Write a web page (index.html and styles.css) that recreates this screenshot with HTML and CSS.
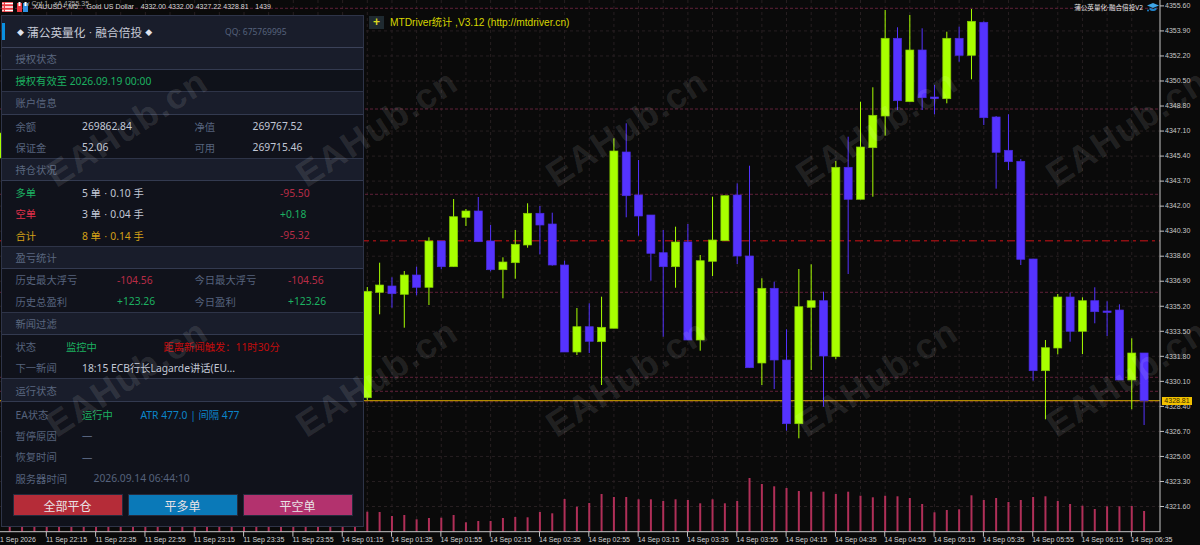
FILE: index.html
```html
<!DOCTYPE html>
<html lang="en">
<head>
    <meta charset="UTF-8">
    <title>XAUUSD+ M5</title>
    <link rel="stylesheet" href="styles.css">
</head>
<body>
<div class="terminal">
    <svg id="chart" class="chart" width="1200" height="545" viewBox="0 0 1200 545"></svg>

    <div class="topbar">
        <svg class="top-icon" width="11" height="10" viewBox="0 0 11 10">
            <rect width="11" height="10" fill="#e8373f"/>
            <path d="M3 1.5h8M3 5h8M3 8.5h8" stroke="#fff" stroke-width="1.3"/>
            <path d="M0 1.5h2M0 5h2M0 8.5h2" stroke="#ffd0d0" stroke-width="1.3"/>
        </svg>
        <svg class="top-icon" width="11" height="10" viewBox="0 0 11 10">
            <path d="M0 1h5v9H0z" fill="#e8373f"/>
            <path d="M6 1h5v9H6z" fill="#2f8fe0"/>
            <path d="M1.5 0h2v4h-2zM7.5 0h2v4h-2z" fill="#fff"/>
        </svg>
        <span class="symbol-info">XAUUSD+,M5:&nbsp;&nbsp; Gold US Dollar&nbsp;&nbsp; 4332.00 4332.00 4327.22 4328.81&nbsp;&nbsp; 1439</span>
        <span class="top-ghost">v Cnt 1 &nbsp; xA 4355.35</span>
        <span class="top-right">蒲公英量化·融合倍投V2</span>
        <svg class="cap-icon" width="12" height="10" viewBox="0 0 12 10">
            <path d="M0 3.5 6 1l6 2.5L6 6z" fill="#3ea6e8"/>
            <path d="M2.5 5.5v2.2C4 9.4 8 9.4 9.5 7.7V5.5L6 7z" fill="#1f7fc4"/>
            <circle cx="1" cy="8.5" r="1" fill="#1f7fc4"/>
        </svg>
    </div>

    <div class="indicator-tag">
        <span class="tag-plus">+</span>
        <span class="tag-name">MTDriver统计 ,V3.12 (http://mtdriver.cn)</span>
    </div>

    <div class="price-axis">
        <span>4355.60</span><span>4353.90</span><span>4352.20</span><span>4350.50</span><span>4348.80</span><span>4347.10</span><span>4345.40</span>
        <span>4343.70</span><span>4342.00</span><span>4340.30</span><span>4338.60</span><span>4336.90</span><span>4335.20</span><span>4333.50</span>
        <span>4331.80</span><span>4330.10</span><span>4328.40</span><span>4326.70</span><span>4325.00</span><span>4323.30</span><span>4321.60</span>
    </div>
    <div class="price-tag">4328.81</div>

    <div class="time-axis">
        <span>11 Sep 2026</span><span>11 Sep 22:15</span><span>11 Sep 22:35</span><span>11 Sep 22:55</span><span>11 Sep 23:15</span><span>11 Sep 23:35</span><span>11 Sep 23:55</span>
        <span>14 Sep 01:15</span><span>14 Sep 01:35</span><span>14 Sep 01:55</span><span>14 Sep 02:15</span><span>14 Sep 02:35</span><span>14 Sep 02:55</span><span>14 Sep 03:15</span>
        <span>14 Sep 03:35</span><span>14 Sep 03:55</span><span>14 Sep 04:15</span><span>14 Sep 04:35</span><span>14 Sep 04:55</span><span>14 Sep 05:15</span><span>14 Sep 05:35</span>
        <span>14 Sep 05:55</span><span>14 Sep 06:15</span><span>14 Sep 06:35</span>
    </div>

    <div class="panel">
        <div class="panel-head">
            <span class="head-title"><span class="diamond">◆</span>蒲公英量化<span class="dot">·</span>融合倍投<span class="diamond">◆</span></span>
            <span class="head-qq">QQ: 675769995</span>
        </div>

        <div class="section-bar">授权状态</div>
        <div class="rows rows-single">
            <div class="row"><span class="green">授权有效至 2026.09.19 00:00</span></div>
        </div>

        <div class="section-bar">账户信息</div>
        <div class="rows rows-pad">
            <div class="row row-account">
                <span class="label">余额</span><span class="value">269862.84</span>
                <span class="label">净值</span><span class="value">269767.52</span>
            </div>
            <div class="row row-account">
                <span class="label">保证金</span><span class="value">52.06</span>
                <span class="label">可用</span><span class="value">269715.46</span>
            </div>
        </div>

        <div class="section-bar">持仓状况</div>
        <div class="rows rows-pad">
            <div class="row row-position">
                <span class="green">多单</span><span class="value">5 单<span class="dot">·</span>0.10 手</span><span class="red">-95.50</span>
            </div>
            <div class="row row-position">
                <span class="red-bright">空单</span><span class="value">3 单<span class="dot">·</span>0.04 手</span><span class="green">+0.18</span>
            </div>
            <div class="row row-position">
                <span class="gold">合计</span><span class="gold">8 单<span class="dot">·</span>0.14 手</span><span class="red">-95.32</span>
            </div>
        </div>

        <div class="section-bar">盈亏统计</div>
        <div class="rows">
            <div class="row row-stats">
                <span class="label">历史最大浮亏</span><span class="red">-104.56</span>
                <span class="label">今日最大浮亏</span><span class="red">-104.56</span>
            </div>
            <div class="row row-stats">
                <span class="label">历史总盈利</span><span class="green">+123.26</span>
                <span class="label">今日盈利</span><span class="green">+123.26</span>
            </div>
        </div>

        <div class="section-bar">新闻过滤</div>
        <div class="rows">
            <div class="row row-news">
                <span class="label">状态</span><span class="green">监控中</span><span class="alert">距离新闻触发：11时30分</span>
            </div>
            <div class="row row-next">
                <span class="label">下一新闻</span><span class="value">18:15 ECB行长Lagarde讲话(EU...</span>
            </div>
        </div>

        <div class="section-bar">运行状态</div>
        <div class="rows rows-status">
            <div class="row row-ea">
                <span class="label">EA状态</span><span class="green">运行中</span><span class="blue">ATR 477.0 | 间隔 477</span>
            </div>
            <div class="row row-next"><span class="label">暂停原因</span><span class="dim">—</span></div>
            <div class="row row-next"><span class="label">恢复时间</span><span class="dim">—</span></div>
            <div class="row row-server"><span class="label">服务器时间</span><span class="label">2026.09.14 06:44:10</span></div>
        </div>

        <div class="actions">
            <button class="btn btn-all">全部平仓</button>
            <button class="btn btn-long">平多单</button>
            <button class="btn btn-short">平空单</button>
        </div>
    </div>

    <div class="watermarks">
        <span>EAHub.cn</span><span>EAHub.cn</span><span>EAHub.cn</span><span>EAHub.cn</span><span>EAHub.cn</span>
        <span>EAHub.cn</span><span>EAHub.cn</span><span>EAHub.cn</span><span>EAHub.cn</span><span>EAHub.cn</span>
    </div>
</div>
<script src="chart.js"></script>
</body>
</html>
```

FILE: styles.css
```css
* {
    box-sizing: border-box;
}
body {
    margin: 0;
    background-color: #0a0a0a;
    font-family: "Noto Sans", "Noto Sans CJK SC", sans-serif;
}
.terminal {
    position: relative;
    width: 1200px;
    height: 545px;
    overflow: hidden;
    background-color: #0a0a0a;
}
.chart {
    position: absolute;
    left: 0;
    top: 0;
}

/* top line of the chart window */
.topbar {
    position: absolute;
    left: 2px;
    right: 0;
    top: 1.5px;
    height: 10px;
    display: flex;
    align-items: center;
    gap: 4px;
}
.top-icon {
    flex: none;
}
.symbol-info {
    margin-left: 1px;
    font: 7px "Liberation Sans", sans-serif;
    word-spacing: 0.3px;
    color: #d8d8d8;
    white-space: nowrap;
}
.top-ghost {
    position: absolute;
    left: 24px;
    top: -2px;
    font: 7px "Liberation Sans", sans-serif;
    color: #a8a8a8;
}
.top-right {
    margin-left: auto;
    font-size: 6.6px;
    color: #e4e4e4;
    white-space: nowrap;
}
.cap-icon {
    margin: 0 41px 0 0;
    flex: none;
}

.indicator-tag {
    position: absolute;
    left: 369px;
    top: 16px;
    display: flex;
    align-items: center;
    gap: 6px;
}
.tag-plus {
    width: 15px;
    height: 13px;
    background-color: #1f2a30;
    color: #d8d820;
    font: bold 12px/13px "Liberation Sans", sans-serif;
    text-align: center;
}
.tag-name {
    font: 10.2px/13px "Liberation Sans", "Noto Sans CJK SC", sans-serif;
    color: #d6d600;
    white-space: nowrap;
}

/* axes */
.price-axis {
    position: absolute;
    left: 1165px;
    top: -6.7px;
    display: flex;
    flex-direction: column;
    font: 7px "Liberation Sans", sans-serif;
    color: #c8c8c8;
}
.price-axis span {
    height: 25.03px;
    line-height: 25.03px;
}
.price-tag {
    position: absolute;
    left: 1162px;
    top: 397px;
    width: 30px;
    height: 8px;
    background-color: #f2c200;
    color: #3a2c00;
    font: 7px/8px "Liberation Sans", sans-serif;
    text-align: center;
}
.time-axis {
    position: absolute;
    left: -3.4px;
    top: 534px;
    display: flex;
    font: 7px/11px "Liberation Sans", sans-serif;
    color: #d4d4d4;
}
.time-axis span {
    flex: none;
    width: 49.32px;
    white-space: nowrap;
}

/* EA panel */
.panel {
    position: absolute;
    left: 1px;
    top: 15px;
    width: 363px;
    height: 512px;
    display: flex;
    flex-direction: column;
    background-color: #10121b;
    border: 1px solid #2e3448;
    font-size: 10.3px;
    color: #c2c8d6;
}
.panel-head {
    position: relative;
    height: 32px;
    flex: none;
    display: flex;
    align-items: center;
    background-color: #191d2b;
    border-bottom: 1px solid #3b4259;
    padding-left: 15px;
}
.panel-head::before {
    content: "";
    position: absolute;
    left: 0;
    top: 7px;
    width: 3px;
    height: 17px;
    background-color: #0a90e0;
}
.head-title {
    display: flex;
    align-items: center;
    width: 208px;
    font-size: 11.7px;
    color: #c6cad6;
    white-space: nowrap;
}
.diamond {
    width: 10px;
    font-size: 7px;
    color: #dfe3ee;
}
.diamond:last-child {
    margin-left: 3px;
}
.dot {
    margin: 0 3px;
    font-family: "Liberation Sans", sans-serif;
}
.head-qq {
    font-size: 8.5px;
    color: #56627c;
}
.section-bar {
    height: 22.2px;
    flex: none;
    display: flex;
    align-items: center;
    padding-left: 13.5px;
    background-color: #191d2b;
    border-bottom: 1px solid #333a50;
    color: #5b6880;
}
.rows {
    flex: none;
    border-bottom: 1px solid #2e3448;
}
.rows-single {
    height: 22.2px;
    background-color: #0f121a;
}
.rows-pad {
    padding-top: 1px;
}
.rows-status {
    border-bottom: 0;
    padding-top: 4px;
}
.row {
    height: 21.6px;
    display: grid;
    align-items: center;
    padding-left: 13.5px;
    white-space: nowrap;
}
.row-account {
    grid-template-columns: 66.5px 112.5px 58px 1fr;
    height: 21.1px;
}
.row-position {
    grid-template-columns: 66.5px 198px 1fr;
    height: 21.27px;
}
.row-stats {
    grid-template-columns: 101.5px 77.5px 93.5px 1fr;
}
.row-news {
    grid-template-columns: 50.5px 97.5px 1fr;
}
.row-next {
    grid-template-columns: 66.5px 1fr;
}
.row-ea {
    grid-template-columns: 66.5px 58.5px 1fr;
    height: 18.6px;
}
.row-server {
    grid-template-columns: 78px 1fr;
}
.label {
    color: #56637d;
}
.value {
    color: #c2c8d6;
}
.dim {
    color: #56637d;
}
.green {
    color: #1cb161;
}
.red {
    color: #b82c46;
}
.red-bright {
    color: #e0304a;
}
.gold {
    color: #d4a017;
}
.alert {
    color: #c40c0c;
}
.blue {
    color: #0b85c9;
}
.actions {
    display: flex;
    gap: 5px;
    padding: 5px 0 0 10.5px;
}
.btn {
    width: 110px;
    height: 22px;
    padding: 0;
    border: 1px solid #262b3d;
    color: #e9e2e6;
    font: 12px "Noto Sans CJK SC", sans-serif;
}
.btn-all {
    background-color: #b52c38;
}
.btn-long {
    background-color: #0a79b8;
}
.btn-short {
    background-color: #b3326e;
}

/* site watermark over everything */
.watermarks {
    position: absolute;
    left: 2px;
    top: 3px;
    display: grid;
    grid-template-columns: repeat(5, 250px);
    grid-auto-rows: 250px;
    place-items: center;
    pointer-events: none;
}
.watermarks span {
    font: bold 36px "Liberation Sans", sans-serif;
    letter-spacing: 1.5px;
    color: rgba(255, 255, 255, 0.11);
    transform: rotate(-33deg);
    white-space: nowrap;
}
```

FILE: chart.js
```js
const NS = 'http://www.w3.org/2000/svg';
const chart = document.getElementById('chart');

const RIGHT = 1160;
const BASE = 531.7;
const STEP = 12.33;
const centre = i => 367.3 + STEP * i;

// kind, wick top, body top, body bottom, wick bottom (screen y)
const candles = [
    ['g', 287, 291.3, 397.7, 400], ['g', 262.7, 285, 292.3, 314.3], ['b', 277.3, 286, 293.7, 307.7], ['g', 271, 275, 294.3, 327.7],
    ['b', 266.7, 275, 287.3, 295.3], ['g', 237.3, 241, 287.3, 305], ['b', 241, 241, 266.7, 269.3], ['g', 199, 216.7, 266.7, 266.7],
    ['g', 209, 211, 217.3, 226], ['b', 197, 211, 241.7, 241.7], ['b', 225, 241, 269.7, 271.3], ['g', 257.3, 262, 269.7, 298.3],
    ['g', 230, 244.3, 262.7, 278.7], ['g', 203.3, 213.3, 245, 247.7], ['b', 206, 213.3, 225, 254.3], ['b', 212.7, 224, 265, 265.7],
    ['b', 260.7, 265, 352, 352], ['g', 308, 326.7, 352, 355], ['b', 303.3, 326.7, 341.3, 353], ['g', 296.7, 327.3, 341.7, 385],
    ['g', 138.3, 151, 328.3, 328.3], ['b', 123.3, 152, 195.7, 217.3], ['b', 160, 195, 216, 235.7], ['b', 215, 215, 253.3, 280.7],
    ['b', 230, 252.7, 266.7, 336.7], ['g', 226.7, 242, 266.7, 287.7], ['b', 224, 242, 340, 340], ['g', 255, 260.7, 340, 350.7],
    ['g', 196.7, 240, 261.3, 276], ['g', 195.7, 195.7, 240.7, 240.7], ['b', 183.3, 195, 256, 264], ['b', 165.7, 256, 367.7, 367.7],
    ['g', 278.3, 288.3, 363, 385], ['b', 281.7, 288.3, 360, 389], ['b', 329.3, 360, 423.7, 430.7], ['g', 269, 306.7, 423.7, 438.3],
    ['g', 264.3, 300.7, 307.3, 370], ['b', 291.7, 300.7, 356, 406.7], ['g', 161, 167.3, 356.7, 359.3], ['b', 136.7, 167.3, 199.3, 274],
    ['g', 101.7, 147, 199.3, 199.3], ['g', 87.3, 115.3, 147.7, 196.7], ['g', 10, 38.3, 116, 135.7], ['b', 27.3, 38.3, 100.7, 110],
    ['g', 15, 50, 101.7, 101.7], ['b', 28.3, 50, 97.7, 110], ['b', 85, 97, 98.6, 114.3], ['g', 31.7, 38.3, 98.7, 103.3],
    ['b', 26.7, 38.3, 55.3, 61.7], ['g', 9, 21.3, 55.3, 79.3], ['b', 21.3, 22.3, 117.7, 125], ['b', 116, 117, 152.3, 188.7],
    ['b', 114.3, 150.3, 161.7, 170], ['b', 159, 161.3, 259.3, 265], ['b', 259, 259, 370.7, 380.7], ['g', 340, 347.7, 370.7, 419.3],
    ['g', 294, 297, 348, 354.3], ['b', 292.7, 297, 331.3, 341.7], ['g', 297.3, 300.7, 331.3, 354], ['b', 287.3, 300.7, 311.7, 323.3],
    ['b', 301.3, 311, 312.4, 336], ['b', 304.3, 310, 380, 380], ['g', 338.3, 353, 380, 409.3], ['b', 353, 353, 400.7, 425]
];

// top of each volume bar, same order as the candles
const volumes = [
    511.7, 512, 516, 515, 519.3, 518, 517.7, 515, 522.3, 521, 521, 518, 517, 517.3, 512, 513.3,
    499, 506.7, 503, 494, 497, 497, 499.3, 499.3, 501, 499.3, 500, 503.3, 499.3, 503.3, 501, 478,
    484, 486.3, 488, 491, 491.7, 491.7, 494, 491.7, 495.7, 497.3, 495.7, 496.3, 498, 504, 512.3, 510,
    509.3, 495.3, 500, 498, 502, 500, 497, 496.3, 501, 504, 505.7, 509, 506.3, 506.3, 506, 511
];

// dashed horizontal levels
const levels = [8.3, 109, 194.3, 292.3, 377.3, 391.3, 401.8];
const COLORS = {g: '#a8ff00', b: '#5533ff'};
const EDGE = {g: '#86cc00', b: '#4a2ce0'};
const GRID = '#271f21';

function add(name, attrs) {
    const el = document.createElementNS(NS, name);
    for (const key in attrs) el.setAttribute(key, attrs[key]);
    chart.appendChild(el);
}

function line(x1, y1, x2, y2, stroke, dash, width) {
    add('line', {x1, y1, x2, y2, stroke, 'stroke-width': width || 1, 'stroke-dasharray': dash || 'none'});
}

function drawCandle(c, x) {
    const [kind, wickTop, top, bottom, wickBottom] = c;
    line(x, wickTop, x, wickBottom, COLORS[kind]);
    add('rect', {
        x: x - 4, y: top, width: 8, height: bottom - top,
        fill: COLORS[kind], stroke: EDGE[kind], 'stroke-width': 0.7
    });
}

// grid
for (let i = -30; i < 64; i += 2) {
    if (centre(i) > 0) line(centre(i), 0, centre(i), BASE, GRID, '3 3');
}
for (let n = 1; n <= 20; n++) {
    const y = 5.9 + 25.03 * n;
    if (n !== 4) line(0, y, RIGHT, y, GRID, '3 3');
}

// price levels
levels.forEach(y => line(0, y, RIGHT, y, '#5e2038', '3 2'));
line(0, 240.7, RIGHT, 240.7, '#8e0f12', '8 4 3 4', 1.4);
line(0, 400.7, RIGHT, 400.7, '#d8aa00');

// volume
for (let i = -30; i < 0; i++) {
    if (centre(i) > 0) line(centre(i), 515, centre(i), BASE, '#b02f58', null, 2);
}
volumes.forEach((top, i) => line(centre(i), top, centre(i), BASE, '#b02f58', null, 2));

// a candle mostly hidden by the panel, only its edge shows
drawCandle(['g', 133, 133, 158, 158], centre(-30));
candles.forEach((c, i) => drawCandle(c, centre(i)));

// axes
line(0, BASE, RIGHT + 0.5, BASE, '#c4c4c4');
line(RIGHT, 0, RIGHT, BASE, '#c4c4c4');
for (let n = 0; n <= 20; n++) {
    const y = 5.9 + 25.03 * n;
    line(RIGHT, y, RIGHT + 4, y, '#c4c4c4');
}
for (let k = 0; k < 24; k++) {
    const x = -3 + 49.32 * k;
    line(x, BASE, x, BASE + 5, '#c4c4c4');
}
```
